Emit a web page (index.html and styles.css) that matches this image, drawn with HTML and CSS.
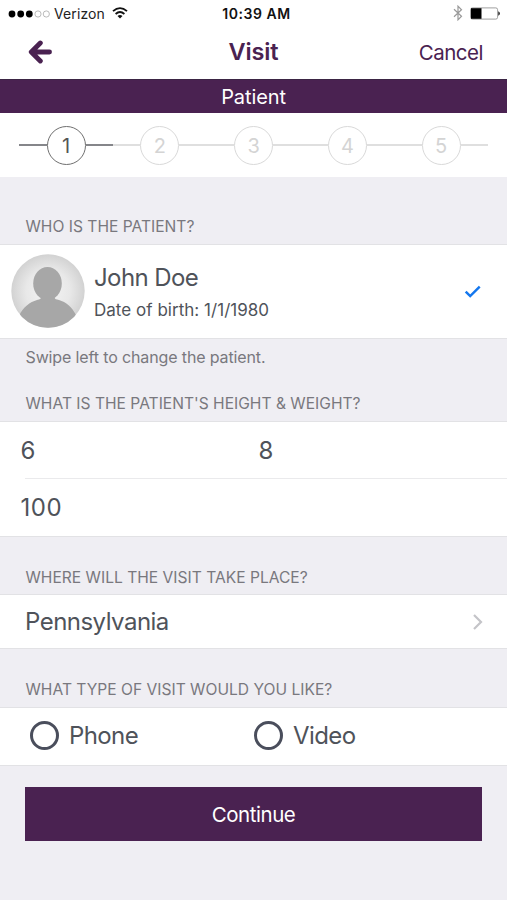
FILE: index.html
```html
<!DOCTYPE html>
<html lang="en">
<head>
<meta charset="utf-8">
<title>Visit</title>
<link rel="stylesheet" href="styles.css">
</head>
<body>
<div class="status">
  <div class="carrier">
    <svg class="signal" width="42" height="8" viewBox="0 0 42 8"><g fill="#000"><circle cx="4" cy="4" r="3.4"/><circle cx="12.7" cy="4" r="3.4"/><circle cx="21.3" cy="4" r="3.4"/></g><g fill="none" stroke="#aaa" stroke-width=".8"><circle cx="30" cy="4" r="3.1"/><circle cx="38.3" cy="4" r="3.1"/></g></svg>
    <span class="carrier-name">Verizon</span>
    <svg class="wifi" width="16" height="12" viewBox="0 0 16 12"><g fill="none" stroke="#111" stroke-width="1.8"><path d="M1 4.2Q8-2 15 4.2"/><path d="M3.6 7Q8 3.1 12.4 7"/></g><path d="M5.5 9Q8 6.9 10.5 9L8 11.5Z" fill="#111"/></svg>
  </div>
  <span class="time">10:39 AM</span>
  <div class="power">
    <svg width="10" height="16" viewBox="0 0 10 16"><path d="M1 4.2 8.5 11.2 5 14.8V1.2L8.5 4.8 1 11.8" fill="none" stroke="#999" stroke-width="1.2"/></svg>
    <svg width="30" height="13" viewBox="0 0 30 13"><rect x=".6" y=".9" width="27" height="11.2" rx="1.8" fill="#fff" stroke="#888" stroke-width=".8"/><path d="M1 1.2h10.5v10.6H1z"/><path d="M28.2 4.3Q30 5 30 6.5T28.2 8.7Z" fill="#333"/></svg>
  </div>
</div>
<header class="nav">
  <svg class="back" width="24" height="24" viewBox="0 0 24 24"><path d="M12.300 3 3.300 12 12.300 21M4 12H21.500" fill="none" stroke="#4a2251" stroke-width="4.9" stroke-linecap="round" stroke-linejoin="round"/></svg>
  <h1 class="title">Visit</h1>
  <span class="cancel">Cancel</span>
</header>
<div class="banner"><span>Patient</span></div>
<div class="steps">
  <div class="step active"><span class="num">1</span></div>
  <div class="step"><span class="num">2</span></div>
  <div class="step"><span class="num">3</span></div>
  <div class="step"><span class="num">4</span></div>
  <div class="step"><span class="num">5</span></div>
</div>
<main>
  <h2 class="label first">WHO IS THE PATIENT?</h2>
  <section class="row patient">
    <svg class="avatar" width="74" height="74" viewBox="0 0 74 74">
      <defs><radialGradient id="g"><stop offset="0" stop-color="#f4f4f4"/><stop offset=".6" stop-color="#e8e8e8"/><stop offset="1" stop-color="#d2d2d2"/></radialGradient><clipPath id="c"><circle cx="37" cy="37" r="36.7"/></clipPath></defs>
      <circle cx="37" cy="37" r="36.7" fill="url(#g)"/>
      <g clip-path="url(#c)" fill="#a7a7a7"><ellipse cx="36.5" cy="29.5" rx="14.3" ry="16.5"/><path d="M30 40h13.5v3.500C44 45 45 45.500 48 46 55 48 61 53 65 61V76H8V62C12 53 19 48 26 46 29 45.500 30 45 30 43Z"/></g>
    </svg>
    <div class="who"><div class="name">John Doe</div><div class="dob">Date of birth: 1/1/1980</div></div>
    <svg class="check" width="18" height="14" viewBox="0 0 18 14"><path d="M1.700 6.700 6.200 11.100 15.700 1.700" fill="none" stroke="#1477ee" stroke-width="2.500"/></svg>
  </section>
  <p class="hint">Swipe left to change the patient.</p>
  <h2 class="label size">WHAT IS THE PATIENT'S HEIGHT &amp; WEIGHT?</h2>
  <section class="measure">
    <div class="height"><span>6</span><span>8</span></div>
    <div class="weight"><span>100</span></div>
  </section>
  <h2 class="label place">WHERE WILL THE VISIT TAKE PLACE?</h2>
  <section class="row state"><span class="state-name">Pennsylvania</span>
    <svg width="12" height="18" viewBox="0 0 12 18"><path d="M2 2 9 9 2 16" fill="none" stroke="#c4c4c8" stroke-width="2.200"/></svg>
  </section>
  <h2 class="label type">WHAT TYPE OF VISIT WOULD YOU LIKE?</h2>
  <section class="row types">
    <div class="option"><i class="radio"></i><span>Phone</span></div>
    <div class="option"><i class="radio"></i><span>Video</span></div>
  </section>
  <button class="continue">Continue</button>
</main>
</body>
</html>
```
FILE: styles.css
```css
* { box-sizing: border-box; }
body { margin: 0; height: 900px; overflow: hidden; background: #efeef3; color: #4f535a; font-family: Inter, "Liberation Sans", sans-serif; }
h1, h2, p { margin: 0; font-weight: 400; }
svg { display: block; flex: none; }
span { white-space: nowrap; }
.status { height: 27px; padding: 0 7px 0 8px; background: #fff; display: grid; grid-template-columns: 1fr auto 1fr; align-items: center; color: #222; }
.carrier { display: flex; align-items: center; }
.carrier-name { font-size: 14px; letter-spacing: .1px; margin: 0 7px 0 4px; }
.wifi { margin-top: -2px; }
.time { font-size: 14px; font-weight: 600; letter-spacing: .55px; color: #111; padding-left: 5px; }
.power { display: flex; align-items: center; justify-content: flex-end; gap: 7px; margin-top: -1px; }
.nav { height: 52px; padding: 0 25px 0 28px; background: #fff; display: grid; grid-template-columns: 1fr auto 1fr; align-items: center; color: #4a2251; }
.title { font-size: 23.500px; font-weight: 600; line-height: 48px; letter-spacing: -.1px; margin: -2px 3px 0 0; }
.nav .back { margin-top: -2px; }
.cancel { font-size: 20.500px; text-align: right; letter-spacing: -.5px; margin: -2px -1px 0 0; }
.banner { height: 34px; line-height: 35px; background: #4a2251; color: #fff; font-size: 20px; text-align: center; letter-spacing: -.1px; border-top: 1px solid #3b2544; }
.steps { height: 64px; padding: 0 19px; background: #fff; display: grid; grid-template-columns: repeat(5, 1fr); align-items: center; }
.step { display: flex; align-items: center; color: #d4d4d4; }
.step::before, .step::after { content: ""; flex: 1; height: 2px; background: #dfdfdf; }
.step::before { flex: 0 0 27.500px; }
.num { width: 39px; height: 39px; border: 1.500px solid #d9d9d9; border-radius: 50%; font-size: 20px; line-height: 38px; text-align: center; }
.active { color: #555; }
.active::before, .active::after { background: #85868a; }
.active .num { border-color: #707070; }
.label { padding-left: 25.500px; font-size: 15.600px; color: #79787e; display: flex; align-items: flex-end; line-height: 20px; }
.first { height: 67px; padding-bottom: 7px; }
.row { background: #fff; border-top: 1px solid #e2e2e5; border-bottom: 1px solid #e2e2e5; display: flex; align-items: center; }
.patient { height: 95px; padding: 0 25px 1px 10.500px; }
.check { margin-top: 2px; }
.who { flex: 1; margin-left: 9.500px; }
.name { font-size: 24px; line-height: 30px; margin-top: 3px; letter-spacing: -.6px; }
.dob { font-size: 17px; line-height: 24px; margin-top: 5px; letter-spacing: .03px; }
.hint { font-size: 16px; padding: 8px 0 0 25.500px; line-height: 20px; height: 28px; letter-spacing: -.13px; color: #79787e; }
.size { height: 54px; padding-bottom: 7px; }
.measure { height: 116px; background: #fff; border: solid #e2e2e5; border-width: 1px 0; font-size: 24px; display: flex; flex-direction: column; }
.height { height: 56px; display: grid; grid-template-columns: 238px 1fr; align-items: center; padding-left: 20.500px; }
.weight { flex: 1; display: flex; align-items: center; margin-left: 25px; border-top: 1px solid #eaeaec; }
.weight span { margin-left: -4.500px; letter-spacing: .6px; }
.place { height: 57px; padding-bottom: 6px; }
.state { height: 55px; padding: 0 23px 0 25px; justify-content: space-between; font-size: 24px; letter-spacing: -.52px; }
.type { height: 58px; padding-bottom: 7px; }
.types { height: 59px; padding-left: 30px; font-size: 24px; letter-spacing: -.6px; display: grid; grid-template-columns: 224px 1fr; }
.option { display: flex; align-items: center; gap: 10px; margin-top: -2px; }
.radio { width: 29px; height: 29px; border: 3px solid #4a4e5c; border-radius: 50%; }
.continue { display: block; margin: 21px 25px 0; width: 457px; height: 54px; padding: 0; border: 0; background: #4a2251; color: #fff; font: 20.500px Inter, "Liberation Sans", sans-serif; letter-spacing: -.45px; }
```
